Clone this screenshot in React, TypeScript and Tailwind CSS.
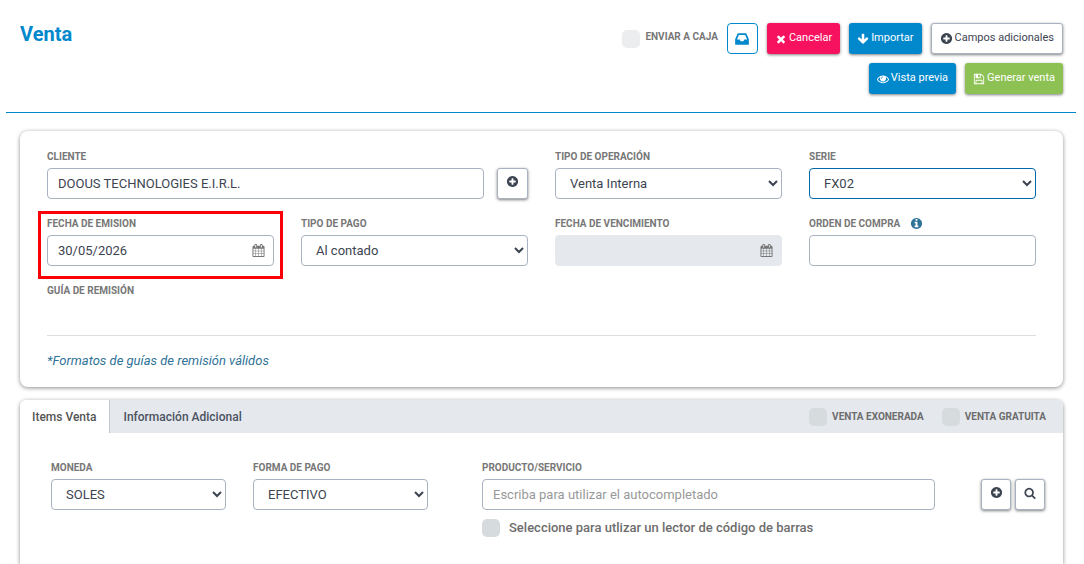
import type { ReactNode } from 'react';

const ICONS = {
  inbox:
    'M1151 960h316q-1-3-2.500-8.500t-2.500-7.500l-212-496h-708l-212 496q-1 3-2.500 8.500t-2.500 7.500h316l95 192h320zm513 30v482q0 26-19 45t-45 19h-1408q-26 0-45-19t-19-45v-482q0-62 25-123l238-552q10-25 36.500-42t52.500-17h832q26 0 52.500 17t36.500 42l238 552q25 61 25 123z',
  times:
    'M1490 1322q0 40-28 68l-136 136q-28 28-68 28t-68-28l-294-294-294 294q-28 28-68 28t-68-28l-136-136q-28-28-28-68t28-68l294-294-294-294q-28-28-28-68t28-68l136-136q28-28 68-28t68 28l294 294 294-294q28-28 68-28t68 28l136 136q28 28 28 68t-28 68l-294 294 294 294q28 28 28 68z',
  arrowDown:
    'M1675 832q0 53-37 90l-651 652q-39 37-91 37-53 0-90-37l-651-652q-38-36-38-90 0-53 38-91l74-75q39-37 91-37 53 0 90 37l294 294v-704q0-52 38-90t90-38h128q52 0 90 38t38 90v704l294-294q37-37 90-37 52 0 91 37l75 75q37 39 37 91z',
  plus:
    'M1344 960v-128q0-26-19-45t-45-19h-256v-256q0-26-19-45t-45-19h-128q-26 0-45 19t-19 45v256h-256q-26 0-45 19t-19 45v128q0 26 19 45t45 19h256v256q0 26 19 45t45 19h128q26 0 45-19t19-45v-256h256q26 0 45-19t19-45zm320-64q0 209-103 385.500t-279.500 279.500-385.500 103-385.500-103-279.500-279.500-103-385.500 103-385.500 279.500-279.500 385.500-103 385.500 103 279.500 279.500 103 385.500z',
  eye:
    'M1664 960q-152-236-381-353 61 104 61 225 0 185-131.500 316.500t-316.500 131.500-316.500-131.500-131.500-316.500q0-121 61-225-229 117-381 353 133 205 333.500 326.500t434.500 121.500 434.500-121.500 333.500-326.500zm-720-384q0-20-14-34t-34-14q-125 0-214.500 89.500t-89.500 214.500q0 20 14 34t34 14 34-14 14-34q0-86 61-147t147-61q20 0 34-14t14-34zm848 384q0 34-20 69-140 230-376.500 368.500t-499.500 138.500-499.500-139-376.500-368q-20-35-20-69t20-69q140-229 376.500-368t499.500-139 499.500 139 376.500 368q20 35 20 69z',
  save:
    'M512 1536h768v-384h-768v384zm896 0h128v-896q0-14-10-38.500t-20-34.500l-281-281q-10-10-34-20t-39-10v416q0 40-28 68t-68 28h-576q-40 0-68-28t-28-68v-416h-128v1280h128v-416q0-40 28-68t68-28h832q40 0 68 28t28 68v416zm-384-928v-320q0-13-9.500-22.500t-22.500-9.500h-192q-13 0-22.500 9.500t-9.500 22.500v320q0 13 9.500 22.500t22.500 9.500h192q13 0 22.500-9.500t9.500-22.500zm640 32v928q0 40-28 68t-68 28h-1344q-40 0-68-28t-28-68v-1344q0-40 28-68t68-28h928q40 0 88 20t76 48l280 280q28 28 48 76t20 88z',
  calendar:
    'M192 1664h288v-288h-288v288zm352 0h320v-288h-320v288zm-352-352h288v-320h-288v320zm352 0h320v-320h-320v320zm-352-384h288v-288h-288v288zm736 736h320v-288h-320v288zm-384-736h320v-288h-320v288zm768 736h288v-288h-288v288zm-384-352h320v-320h-320v320zm-352-864v-288q0-13-9.500-22.500t-22.500-9.500h-64q-13 0-22.500 9.500t-9.500 22.500v288q0 13 9.500 22.500t22.500 9.500h64q13 0 22.500-9.500t9.500-22.500zm736 864h288v-320h-288v320zm-384-384h320v-288h-320v288zm384 0h288v-288h-288v288zm32-480v-288q0-13-9.500-22.500t-22.500-9.500h-64q-13 0-22.500 9.500t-9.500 22.500v288q0 13 9.500 22.500t22.500 9.500h64q13 0 22.500-9.500t9.500-22.500zm384-64v1280q0 52-38 90t-90 38h-1408q-52 0-90-38t-38-90v-1280q0-52 38-90t90-38h128v-96q0-66 47-113t113-47h64q66 0 113 47t47 113v96h384v-96q0-66 47-113t113-47h64q66 0 113 47t47 113v96h128q52 0 90 38t38 90z',
  info:
    'M1152 1376v-160q0-14-9-23t-23-9h-96v-512q0-14-9-23t-23-9h-320q-14 0-23 9t-9 23v160q0 14 9 23t23 9h96v320h-96q-14 0-23 9t-9 23v160q0 14 9 23t23 9h448q14 0 23-9t9-23zm-128-896v-160q0-14-9-23t-23-9h-192q-14 0-23 9t-9 23v160q0 14 9 23t23 9h192q14 0 23-9t9-23zm640 416q0 209-103 385.500t-279.500 279.500-385.500 103-385.500-103-279.500-279.500-103-385.500 103-385.500 279.500-279.500 385.500-103 385.500 103 279.500 279.500 103 385.500z',
  search:
    'M1216 832q0-185-131.500-316.500t-316.500-131.500-316.500 131.500-131.500 316.500 131.500 316.500 316.500 131.500 316.500-131.500 131.500-316.500zm512 832q0 52-38 90t-90 38q-54 0-90-38l-343-342q-179 124-399 124-143 0-273.500-55.500t-225-150-150-225-55.500-273.500 55.500-273.500 150-225 225-150 273.500-55.500 273.500 55.500 225 150 150 225 55.500 273.500q0 220-124 399l343 343q37 37 37 90z',
};

function Icon({ name, className }: { name: keyof typeof ICONS; className: string }) {
  return (
    <svg viewBox="0 0 1792 1792" fill="currentColor" aria-hidden="true" className={`shrink-0 ${className}`}>
      <path d={ICONS[name]} />
    </svg>
  );
}

const LABEL = 'flex h-4 items-center text-[10px] font-bold uppercase text-[#777777]';
const CONTROL =
  'h-[31px] w-full min-w-0 rounded-[4px] border text-[13px] text-[#3d4451] outline-none placeholder:text-[#999999]';
const IDLE = 'border-[#a9b2c0] bg-white';
const BUTTON =
  'flex h-[31px] items-center justify-center gap-0.5 rounded-[3px] px-2 text-[11px] shadow-[0_1px_3px_rgba(0,0,0,0.5)]';
const SQUARE =
  'flex h-[31px] shrink-0 items-center justify-center rounded-[3px] border border-[#a9b2c0] bg-white pb-1 text-[#3d4451] shadow-[0_1px_3px_rgba(0,0,0,0.5)]';
const CHECK = 'size-[18px] shrink-0 appearance-none rounded-[5px]';

function Field({ id, label, extra, children }: { id: string; label: string; extra?: ReactNode; children: ReactNode }) {
  return (
    <div className="flex min-w-0 flex-col gap-1">
      <label htmlFor={id} className={LABEL}>
        {label}
        {extra}
      </label>
      {children}
    </div>
  );
}

function Select({ id, value, focused }: { id: string; value: string; focused?: boolean }) {
  return (
    <select id={id} className={`${CONTROL} px-2.5 ${focused ? 'border-[#0069a8] bg-white' : IDLE}`}>
      <option>{value}</option>
    </select>
  );
}

function DateInput({ id, value, disabled }: { id: string; value?: string; disabled?: boolean }) {
  return (
    <div className="relative">
      <input
        id={id}
        type="text"
        defaultValue={value}
        disabled={disabled}
        className={`${CONTROL} pl-2.5 pr-8 ${disabled ? 'border-[#e5e8ed] bg-[#e5e8ed]' : IDLE}`}
      />
      <Icon name="calendar" className="absolute right-[9px] top-[9px] size-[13px] text-[#777777]" />
    </div>
  );
}

export default function App() {
  return (
    <div className="flex min-h-screen flex-col bg-white font-['Roboto',sans-serif] text-[#3d4451]">
      <header className="ml-1.5 mr-2 flex items-start justify-between border-b border-[#0088cc] pb-[18px] pl-3.5 pr-[13px] pt-[23px]">
        <h1 className="text-[20px] font-bold leading-[22px] text-[#0088cc]">Venta</h1>
        <div className="flex max-w-[470px] flex-wrap justify-end gap-[9px]">
          <label className="flex h-[31px] items-center gap-[5px] text-[10px] font-bold text-[#777777]">
            <input type="checkbox" className={`${CHECK} bg-[#ebedee]`} />
            <span className="pb-1">ENVIAR A CAJA</span>
          </label>
          <button
            type="button"
            aria-label="Caja"
            className="flex size-[31px] items-center justify-center rounded-[4px] border border-[#0088cc] bg-white text-[#0088cc]"
          >
            <Icon name="inbox" className="size-4" />
          </button>
          <button type="button" className={`${BUTTON} bg-[#f7125f] text-white`}>
            <Icon name="times" className="size-3" />
            Cancelar
          </button>
          <button type="button" className={`${BUTTON} bg-[#0088cc] text-white`}>
            <Icon name="arrowDown" className="size-3" />
            Importar
          </button>
          <button type="button" className={`${BUTTON} border border-[#a9b2c0] bg-white text-[#3d4451]`}>
            <Icon name="plus" className="size-[13px]" />
            Campos adicionales
          </button>
          <button type="button" className={`${BUTTON} bg-[#0088cc] text-white`}>
            <Icon name="eye" className="size-3" />
            Vista previa
          </button>
          <button type="button" className={`${BUTTON} bg-[#8dc153] text-white`}>
            <Icon name="save" className="size-3" />
            Generar venta
          </button>
        </div>
      </header>

      <main className="ml-5 mr-[21px] mt-[18px] flex flex-1 flex-col gap-[13px]">
        <section className="rounded-[8px] bg-white px-[27px] pb-4 pt-[17px] shadow-[0_1px_4px_rgba(0,0,0,0.45)]">
          <div className="grid grid-cols-4 gap-x-[27px] gap-y-4">
            <div className="col-span-2 flex items-end gap-[13px]">
              <div className="min-w-0 flex-1">
                <Field id="cliente" label="Cliente">
                  <input
                    id="cliente"
                    type="text"
                    defaultValue="DOOUS TECHNOLOGIES E.I.R.L."
                    className={`${CONTROL} ${IDLE} px-2.5`}
                  />
                </Field>
              </div>
              <button type="button" aria-label="Agregar cliente" className={`${SQUARE} w-[31px]`}>
                <Icon name="plus" className="size-[13px]" />
              </button>
            </div>
            <Field id="operacion" label="Tipo de operación">
              <Select id="operacion" value="Venta Interna" />
            </Field>
            <Field id="serie" label="Serie">
              <Select id="serie" value="FX02" focused />
            </Field>

            <div className="relative">
              <Field id="emision" label="Fecha de emision">
                <DateInput id="emision" value="30/05/2026" />
              </Field>
              <div className="pointer-events-none absolute -bottom-[13px] -left-[9px] -right-[9px] -top-1 border-[3px] border-[#fb0007]" />
            </div>
            <Field id="pago" label="Tipo de pago">
              <Select id="pago" value="Al contado" />
            </Field>
            <Field id="vencimiento" label="Fecha de vencimiento">
              <DateInput id="vencimiento" disabled />
            </Field>
            <Field
              id="orden"
              label="Orden de compra"
              extra={<Icon name="info" className="ml-2.5 size-[13px] text-[#2f7397]" />}
            >
              <input id="orden" type="text" className={`${CONTROL} ${IDLE} px-2.5`} />
            </Field>
          </div>
          <h2 className={`${LABEL} mt-4`}>Guía de remisión</h2>
          <hr className="mt-[37px] border-[#dddddd]" />
          <p className="mt-[15px] text-[13px] italic leading-5 text-[#2f7397]">*Formatos de guías de remisión válidos</p>
        </section>

        <section className="flex-1 rounded-t-[6px] bg-white shadow-[0_1px_4px_rgba(0,0,0,0.45)]">
          <div className="flex h-[33px] items-stretch overflow-hidden rounded-t-[6px] bg-[#e5e8ed] text-[12px] font-medium">
            <button type="button" className="border-r border-[#c3c8d0] bg-white px-3 text-[#555555]">
              Items Venta
            </button>
            <button type="button" className="px-3.5 text-[#4c5361]">
              Información Adicional
            </button>
            <div className="ml-auto flex items-center gap-[18px] pr-[17px] text-[10px] font-bold text-[#6d6d6d]">
              <label className="flex items-center gap-[5px]">
                <input type="checkbox" className={`${CHECK} bg-[#d6dbde]`} />
                VENTA EXONERADA
              </label>
              <label className="flex items-center gap-[5px]">
                <input type="checkbox" className={`${CHECK} bg-[#d6dbde]`} />
                VENTA GRATUITA
              </label>
            </div>
          </div>

          <div className="flex items-start pb-6 pl-[31px] pr-[18px] pt-[26px]">
            <div className="grid min-w-0 flex-[377] grid-cols-2 gap-[27px]">
              <Field id="moneda" label="Moneda">
                <Select id="moneda" value="SOLES" />
              </Field>
              <Field id="forma" label="Forma de pago">
                <Select id="forma" value="EFECTIVO" />
              </Field>
            </div>
            <div className="ml-[54px] min-w-0 flex-[453]">
              <Field id="producto" label="Producto/Servicio">
                <input
                  id="producto"
                  type="text"
                  placeholder="Escriba para utilizar el autocompletado"
                  className={`${CONTROL} ${IDLE} px-2.5`}
                />
              </Field>
              <label className="mt-2 flex items-center gap-[9px] text-[13px] font-medium text-[#6d6d6d]">
                <input type="checkbox" className={`${CHECK} bg-[#d6dbde]`} />
                Seleccione para utlizar un lector de código de barras
              </label>
            </div>
            <div className="ml-[46px] mt-5 flex gap-1">
              <button type="button" aria-label="Agregar producto" className={`${SQUARE} w-[30px]`}>
                <Icon name="plus" className="size-[13px]" />
              </button>
              <button type="button" aria-label="Buscar producto" className={`${SQUARE} w-[30px]`}>
                <Icon name="search" className="size-3" />
              </button>
            </div>
          </div>
        </section>
      </main>
    </div>
  );
}
